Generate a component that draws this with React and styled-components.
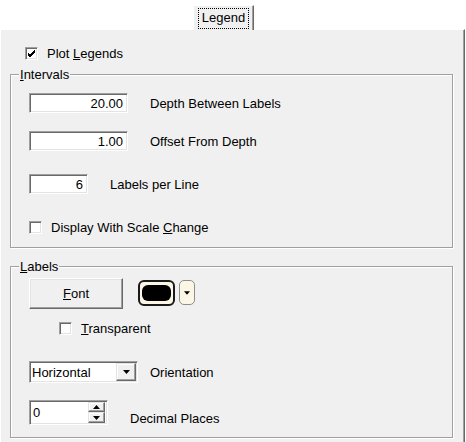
import React from 'react';
import styled, { createGlobalStyle } from 'styled-components';

const GlobalStyle = createGlobalStyle`
  html, body {
    margin: 0;
    padding: 0;
    background: #ffffff;
  }
  body {
    font-family: "Liberation Sans", Arial, sans-serif;
    font-size: 13px;
    color: #000;
  }
`;

const Window = styled.div`
  width: 466px;
  height: 442px;
  overflow: hidden;
  display: flex;
  flex-direction: column;
  background: #ffffff;
`;

const TabStrip = styled.div`
  height: 29px;
  flex: none;
  display: flex;
  align-items: flex-end;
  padding-left: 193px;
`;

const Tab = styled.div`
  width: 61px;
  height: 25px;
  box-sizing: border-box;
  background: #f0f0f0;
  border-top: 1px solid #ffffff;
  border-left: 1px solid #ffffff;
  border-right: 1px solid #696969;
  box-shadow: inset -1px 0 0 #a0a0a0;
  display: flex;
  align-items: center;
  justify-content: center;
  margin-bottom: -1px;
  position: relative;
  z-index: 1;
`;

const FocusLabel = styled.span`
  border: 1px dotted #000;
  padding: 1px 3px 2px;
  line-height: 16px;
`;

const Panel = styled.div`
  width: 465px;
  height: 420px;
  flex: none;
  box-sizing: border-box;
  background: #f0f0f0;
  border-top: 1px solid #ffffff;
  border-left: 1px solid #ffffff;
  border-right: 1px solid #696969;
  box-shadow: inset -1px 0 0 #a0a0a0;
  padding-left: 9px;
  display: flex;
  flex-direction: column;
`;

const CheckRow = styled.label`
  display: flex;
  align-items: center;
  height: 13px;
  margin-top: ${(p) => p.$top || 0}px;
  margin-left: ${(p) => p.$left || 0}px;
`;

const Box = styled.span`
  width: 13px;
  height: 13px;
  box-sizing: border-box;
  background: #ffffff;
  border: 1px solid;
  border-color: #a0a0a0 #ffffff #ffffff #a0a0a0;
  box-shadow: inset 1px 1px 0 #696969, inset -1px -1px 0 #e3e3e3;
  display: flex;
  align-items: center;
  justify-content: center;
  flex: none;
  margin-right: 9px;
`;

const Group = styled.div`
  position: relative;
  width: 443px;
  height: ${(p) => p.$height}px;
  margin-top: ${(p) => p.$top}px;
  flex: none;
  box-sizing: border-box;
  border: 1px solid #a0a0a0;
  box-shadow: inset 1px 1px 0 #ffffff, 1px 1px 0 #ffffff;
  padding: ${(p) => p.$padTop}px 0 0 18px;
  display: flex;
  flex-direction: column;
`;

const Caption = styled.span`
  position: absolute;
  top: -8px;
  left: 8px;
  padding: 0 1px;
  background: #f0f0f0;
  line-height: 15px;
`;

const Row = styled.div`
  display: flex;
  align-items: center;
  margin-top: ${(p) => p.$top || 0}px;
`;

const Field = styled.div`
  width: ${(p) => p.$width}px;
  height: ${(p) => p.$height || 20}px;
  box-sizing: border-box;
  background: #ffffff;
  border: 1px solid;
  border-color: #a0a0a0 #ffffff #ffffff #a0a0a0;
  box-shadow: inset 1px 1px 0 #696969, inset -1px -1px 0 #e3e3e3;
  display: flex;
  align-items: center;
  padding: 0 4px 0 3px;
  flex: none;
`;

const FieldText = styled.span`
  flex: 1;
  text-align: ${(p) => (p.$right ? 'right' : 'left')};
`;

const Label = styled.span`
  margin-left: ${(p) => p.$gap}px;
  padding-top: ${(p) => p.$drop || 0}px;
`;

const Button = styled.div`
  width: 94px;
  height: 31px;
  box-sizing: border-box;
  background: #f0f0f0;
  border: 1px solid;
  border-color: #ffffff #696969 #696969 #ffffff;
  box-shadow: inset -1px -1px 0 #a0a0a0, inset 1px 1px 0 #e3e3e3;
  display: flex;
  align-items: center;
  justify-content: center;
  flex: none;
`;

const ColorSwatch = styled.div`
  width: 37px;
  height: 26px;
  box-sizing: border-box;
  margin-left: 15px;
  border: 2px solid #1a1a1a;
  border-radius: 6px;
  background: #fbf6e6;
  padding: 3px 2px;
  align-self: flex-start;
  margin-top: 2px;
`;

const SwatchFill = styled.div`
  width: 100%;
  height: 100%;
  background: #000;
  border-radius: 6px;
`;

const SwatchDrop = styled.div`
  width: 16px;
  height: 25px;
  box-sizing: border-box;
  margin-left: 4px;
  border: 1px solid #8e8e8e;
  border-radius: 5px;
  background: #fbf6e6;
  align-self: flex-start;
  margin-top: 2px;
  display: flex;
  align-items: center;
  justify-content: center;
`;

const ArrowButton = styled.div`
  width: ${(p) => p.$w}px;
  height: ${(p) => p.$h}px;
  box-sizing: border-box;
  background: #f0f0f0;
  border: 1px solid;
  border-color: #e3e3e3 #696969 #696969 #e3e3e3;
  box-shadow: inset -1px -1px 0 #a0a0a0, inset 1px 1px 0 #ffffff;
  display: flex;
  align-items: center;
  justify-content: center;
`;

const SelectBox = styled(Field)`
  padding: 0 1px 0 2px;
`;

const SpinBox = styled(Field)`
  padding: 0 2px 0 3px;
`;

const SpinButtons = styled.div`
  display: flex;
  flex-direction: column;
  margin-left: auto;
`;

const U = styled.span`
  text-decoration: underline;
`;

const Tick = () => (
  <svg width="9" height="9" viewBox="0 0 9 9">
    <path d="M1 4 L3 6 L8 1 M1 5 L3 7 L8 2 M1 6 L3 8 L8 3" stroke="#000" strokeWidth="1" fill="none" shapeRendering="crispEdges" />
  </svg>
);

const Down = ({ w = 7 }) => (
  <svg width={w} height="4" viewBox="0 0 7 4">
    <path d="M0 0 H7 L3.5 4 Z" fill="#000" />
  </svg>
);

const Up = () => (
  <svg width="7" height="4" viewBox="0 0 7 4">
    <path d="M0 4 H7 L3.5 0 Z" fill="#000" />
  </svg>
);

export default function App() {
  return (
    <>
      <GlobalStyle />
      <Window>
        <TabStrip>
          <Tab>
            <FocusLabel>Legend</FocusLabel>
          </Tab>
        </TabStrip>
        <Panel>
          <CheckRow $top={17} $left={15}>
            <Box><Tick /></Box>
            Plot&nbsp;<U>L</U>egends
          </CheckRow>

          <Group $top={14} $height={174} $padTop={18}>
            <Caption><U>I</U>ntervals</Caption>
            <Row>
              <Field $width={99}><FieldText $right>20.00</FieldText></Field>
              <Label $gap={22}>Depth Between Labels</Label>
            </Row>
            <Row $top={18}>
              <Field $width={99}><FieldText $right>1.00</FieldText></Field>
              <Label $gap={22}>Offset From Depth</Label>
            </Row>
            <Row $top={23}>
              <Field $width={59}><FieldText $right>6</FieldText></Field>
              <Label $gap={22}>Labels per Line</Label>
            </Row>
            <CheckRow $top={27}>
              <Box />
              Display With Scale&nbsp;<U>C</U>hange
            </CheckRow>
          </Group>

          <Group $top={18} $height={172} $padTop={11}>
            <Caption><U>L</U>abels</Caption>
            <Row>
              <Button><span><U>F</U>ont</span></Button>
              <ColorSwatch><SwatchFill /></ColorSwatch>
              <SwatchDrop><Down w={6} /></SwatchDrop>
            </Row>
            <CheckRow $top={13} $left={30}>
              <Box />
              <span><U>T</U>ransparent</span>
            </CheckRow>
            <Row $top={26}>
              <SelectBox $width={109} $height={22}>
                <FieldText>Horizontal</FieldText>
                <ArrowButton $w={20} $h={18}><Down /></ArrowButton>
              </SelectBox>
              <Label $gap={12}>Orientation</Label>
            </Row>
            <Row $top={16}>
              <SpinBox $width={79} $height={25}>
                <FieldText>0</FieldText>
                <SpinButtons>
                  <ArrowButton $w={17} $h={10}><Up /></ArrowButton>
                  <ArrowButton $w={17} $h={11}><Down /></ArrowButton>
                </SpinButtons>
              </SpinBox>
              <Label $gap={22} $drop={12}>Decimal Places</Label>
            </Row>
          </Group>
        </Panel>
      </Window>
    </>
  );
}
